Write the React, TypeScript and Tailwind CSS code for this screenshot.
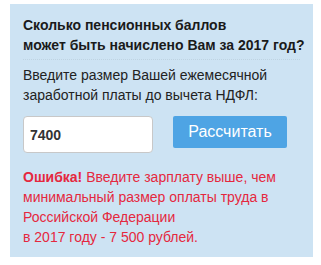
export default function App() {
  return (
    <div className="min-h-screen bg-white pt-1 pl-[10px] font-['Liberation_Sans',Arial,sans-serif]">
      <div className="w-[303px] h-[253px] bg-[#cde3f3] px-[13px] pt-[11px] whitespace-nowrap">
        <h2 className="text-[14px] leading-[20px] font-bold text-[#1a1a1a]">
          Сколько пенсионных баллов
          <br />
          может быть начислено Вам за 2017 год?
        </h2>
        <div className="mt-[4px] mb-[5px] border-t border-dotted border-[#bed3e2]" />
        <p className="text-[14px] leading-[20px] text-[#222]">
          Введите размер Вашей ежемесячной
          <br />
          заработной платы до вычета НДФЛ:
        </p>
        <div className="mt-[11px] flex items-start gap-[20px]">
          <input
            defaultValue="7400"
            className="w-[130px] h-[37px] rounded-[4px] border border-[#c8c8c8] bg-white px-[6px] text-[14px] font-bold text-[#333] outline-none"
          />
          <button className="w-[114px] h-[32px] rounded-[2px] bg-[#4ea4e4] text-white text-[16px] leading-[32px]">
            Рассчитать
          </button>
        </div>
        <p className="mt-[14px] text-[14px] leading-[20px] text-[#e5283e]">
          <b>Ошибка!</b> Введите зарплату выше, чем
          <br />
          минимальный размер оплаты труда в
          <br />
          Российской Федерации
          <br />в 2017 году - 7 500 рублей.
        </p>
      </div>
    </div>
  );
}
